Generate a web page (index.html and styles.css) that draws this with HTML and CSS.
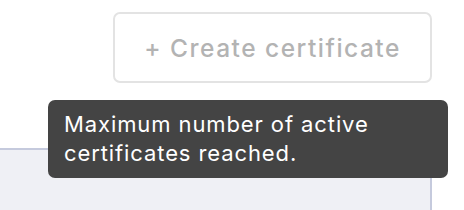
FILE: index.html
```html
<!DOCTYPE html>
<html lang="en">
<head>
    <meta charset="UTF-8">
    <meta name="viewport" content="width=device-width, initial-scale=1.0">
    <title>Certificates</title>
    <link rel="stylesheet" href="styles.css">
</head>
<body>
    <div class="page">
        <div class="toolbar">
            <button class="create-button" disabled>+ Create certificate</button>
        </div>
        <div class="panel"></div>
        <div class="tooltip">Maximum number of active certificates reached.</div>
    </div>
</body>
</html>
```

FILE: styles.css
```css
body {
    margin: 0;
    background-color: white;
    font-family: Inter, "Noto Sans", sans-serif;
}
.page {
    position: relative;
    width: 464px;
    height: 210px;
    overflow: hidden;
}
.toolbar {
    display: flex;
    justify-content: flex-end;
    padding: 12px 32px 0 0;
}
.create-button {
    width: 319px;
    height: 71px;
    padding: 0;
    background-color: white;
    border: 2px solid #e3e3e3;
    border-radius: 7px;
    color: #b3b3b3;
    font-family: Inter, "Noto Sans", sans-serif;
    font-size: 24.5px;
    font-weight: 500;
    letter-spacing: 1.5px;
    cursor: not-allowed;
}
.panel {
    margin: 65px 32px 0 -10px;
    height: 80px;
    background-color: #eff0f5;
    border-top: 2px solid #c5cadd;
    border-right: 2px solid #c5cadd;
}
.tooltip {
    position: absolute;
    left: 48px;
    top: 100px;
    width: 400px;
    box-sizing: border-box;
    padding: 10px 16px;
    background-color: #444444;
    border-radius: 7px;
    color: white;
    font-size: 22px;
    line-height: 29px;
    letter-spacing: 0.9px;
}
```
